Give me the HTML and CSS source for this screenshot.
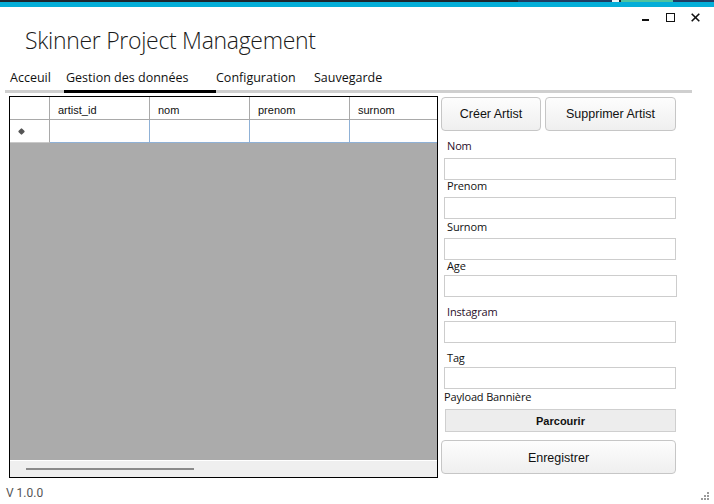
FILE: index.html
```html
<!DOCTYPE html>
<html lang="fr">
<head>
<meta charset="utf-8">
<title>Skinner Project Management</title>
<link rel="stylesheet" href="styles.css">
</head>
<body>
<div class="window">
  <div class="topstrip">
    <div class="strip-dark"><span class="seg seg-a"></span><span class="seg seg-b"></span><span class="seg seg-c"></span><span class="seg seg-d"></span></div>
    <div class="strip-cyan"></div>
  </div>
  <div class="titlebar">
    <div class="controls">
      <span class="ctl ctl-min"></span>
      <span class="ctl ctl-max"></span>
      <span class="ctl ctl-close">
        <svg width="9" height="9" viewBox="0 0 9 9"><path d="M0.7 0.7L8.3 8.3M8.3 0.7L0.7 8.3" stroke="#111" stroke-width="1.6"/></svg>
      </span>
    </div>
    <h1 class="title">Skinner Project Management</h1>
  </div>
  <nav class="tabs">
    <span class="tab t1">Acceuil</span>
    <span class="tab t2 active">Gestion des données</span>
    <span class="tab t3">Configuration</span>
    <span class="tab t4">Sauvegarde</span>
  </nav>
  <div class="main">
    <div class="gridview">
      <div class="grow head">
        <div class="cell rh"></div>
        <div class="cell c1">artist_id</div>
        <div class="cell c2">nom</div>
        <div class="cell c3">prenom</div>
        <div class="cell c4">surnom</div>
      </div>
      <div class="grow newrow">
        <div class="cell rh"><span class="star"></span></div>
        <div class="cell c1"></div>
        <div class="cell c2"></div>
        <div class="cell c3"></div>
        <div class="cell c4"></div>
      </div>
      <div class="empty"></div>
      <div class="hscroll"><span class="thumb"></span></div>
    </div>
    <div class="panel">
      <div class="btnrow">
        <button class="btn b-create">Créer Artist</button>
        <button class="btn b-delete">Supprimer Artist</button>
      </div>
      <label class="lbl l-nom">Nom</label>
      <div class="input i-nom"></div>
      <label class="lbl l-prenom">Prenom</label>
      <div class="input i-prenom"></div>
      <label class="lbl l-surnom">Surnom</label>
      <div class="input i-surnom"></div>
      <label class="lbl l-age">Age</label>
      <div class="input i-age wide"></div>
      <label class="lbl l-insta">Instagram</label>
      <div class="input i-insta"></div>
      <label class="lbl l-tag">Tag</label>
      <div class="input i-tag"></div>
      <label class="lbl l-payload">Payload Bannière</label>
      <button class="browse">Parcourir</button>
      <button class="btn b-save">Enregistrer</button>
    </div>
  </div>
  <div class="footer">
    <span class="version">V 1.0.0</span>
    <span class="grip">
      <svg width="9" height="9" viewBox="0 0 9 9" fill="#9a9a9a">
        <rect x="7" y="1" width="2" height="2"/><rect x="4" y="4" width="2" height="2"/><rect x="7" y="4" width="2" height="2"/><rect x="1" y="7" width="2" height="2"/><rect x="4" y="7" width="2" height="2"/><rect x="7" y="7" width="2" height="2"/>
      </svg>
    </span>
  </div>
</div>
</body>
</html>
```

FILE: styles.css
```css
* { box-sizing: border-box; }
html, body { margin: 0; padding: 0; background: #fff; }
body { width: 714px; height: 504px; overflow: hidden; font-family: "Open Sans", "Noto Sans", sans-serif; color: #111; }
.window { width: 714px; height: 504px; }

.topstrip { height: 7px; }
.strip-dark { height: 2px; background: #1d2730; display: flex; }
.seg { display: block; height: 2px; }
.seg-a { margin-left: 518px; width: 94px; background: #1f3d63; }
.seg-b { width: 7px; background: #f4f4f4; }
.seg-c { width: 52px; background: #4fc3a1; margin-left: 2px; }
.seg-d { width: 41px; background: #1f3d63; }
.strip-cyan { height: 5px; background: #04aed8; }

.titlebar { position: relative; height: 52px; }
.controls { position: absolute; top: 6px; right: 14px; display: flex; align-items: flex-start; height: 9px; }
.ctl { display: block; }
.ctl-min { width: 7px; height: 2px; background: #111; margin-top: 6px; }
.ctl-max { width: 9px; height: 9px; border: 1.5px solid #111; margin-left: 17px; }
.ctl-close { width: 9px; height: 9px; margin-left: 16px; }
.ctl-close svg { display: block; }
.title { margin: 0; padding: 18px 0 0 25px; font-weight: 300; font-size: 23px; line-height: 30px; color: #1a1a1a; letter-spacing: -0.3px; }

.tabs { display: flex; height: 34px; margin: 0 22px 0 5px; border-bottom: 3px solid #cfcfcf; font-size: 12.5px; }
.tab { display: block; padding-top: 10px; line-height: 18px; color: #111; }
.t1 { padding-left: 5px; width: 59px; }
.t2 { width: 152px; padding-left: 2px; }
.t3 { width: 98px; }
.tab.active { border-bottom: 3px solid #000; margin-bottom: -3px; }

.main { display: flex; margin-top: 3px; padding-left: 9px; gap: 3px; height: 382px; }
.gridview { width: 429px; height: 382px; border: 1px solid #000; background: #ababab; display: flex; flex-direction: column; font-family: "Liberation Sans", Arial, sans-serif; font-size: 11px; }
.grow { display: flex; height: 23px; background: #fff; flex: none; }
.cell { height: 23px; border-right: 1px solid #a9a9a9; border-bottom: 1px solid #a9a9a9; padding: 7px 0 0 8px; color: #111; }
.rh { width: 40px; }
.c1 { width: 100px; }
.c2 { width: 100px; }
.c3 { width: 100px; }
.c4 { width: 87px; border-right: none; }
.newrow .c1, .newrow .c2, .newrow .c3 { border-right-color: #8fb1d6; border-bottom-color: #8fb1d6; }
.newrow .c4 { border-bottom-color: #8fb1d6; }
.newrow .rh { border-bottom-color: #c9c9c9; padding: 9px 0 0 9px; }
.star { display: block; width: 5px; height: 5px; border-radius: 1px; background: #555; transform: rotate(45deg); }
.empty { flex: 1; }
.hscroll { height: 17px; background: #efefef; border-top: 1px solid #fff; padding: 7px 0 0 16px; flex: none; }
.thumb { display: block; width: 168px; height: 2px; background: #8a8a8a; }

.panel { width: 236px; display: flex; flex-direction: column; font-size: 11px; }
.btnrow { display: flex; gap: 4px; height: 34px; margin-top: 1px; flex: none; }
.btn { font-family: "Liberation Sans", Arial, sans-serif; font-size: 12.5px; color: #111; border: 1px solid #c6c6c6; border-radius: 4px; background: linear-gradient(#fdfdfd, #efefef); padding: 0; flex: none; }
.b-create { width: 100px; height: 34px; }
.b-delete { width: 131px; height: 34px; }
.lbl { display: block; height: 12px; line-height: 12px; padding-left: 6px; color: #111; letter-spacing: -0.15px; flex: none; }
.l-nom { margin-top: 9px; color: #2a0f2a; }
.l-prenom { margin-top: 0; }
.l-surnom { margin-top: 2px; }
.l-age { margin-top: 0; }
.l-insta { margin-top: 9px; color: #2a0f2a; }
.l-tag { margin-top: 9px; }
.l-payload { margin-top: 2px; padding-left: 3px; }
.input { height: 22px; margin-left: 3px; width: 232px; border: 1px solid #cdcdcd; background: #fff; flex: none; }
.i-nom { margin-top: 6px; }
.i-prenom { margin-top: 5px; }
.i-surnom { margin-top: 5px; }
.i-age { margin-top: 3px; }
.i-insta { margin-top: 3px; }
.i-tag { margin-top: 3px; }
.input.wide { width: 233px; }
.browse { margin: 6px 0 0 4px; width: 231px; height: 23px; background: #ededed; border: 1px solid #cfcfcf; font-family: "Liberation Sans", Arial, sans-serif; font-weight: bold; font-size: 11px; color: #111; padding: 0; flex: none; }
.btn.b-save { margin-top: 8px; width: 235px; height: 34px; padding-top: 1px; }

.footer { display: flex; justify-content: space-between; align-items: flex-start; padding: 8px 5px 0 6px; height: 26px; }
.version { font-family: "Roboto", "Noto Sans", sans-serif; font-size: 12px; color: #555; line-height: 14px; }
.grip { display: block; width: 9px; height: 9px; margin-top: 5px; }
.grip svg { display: block; }
```
